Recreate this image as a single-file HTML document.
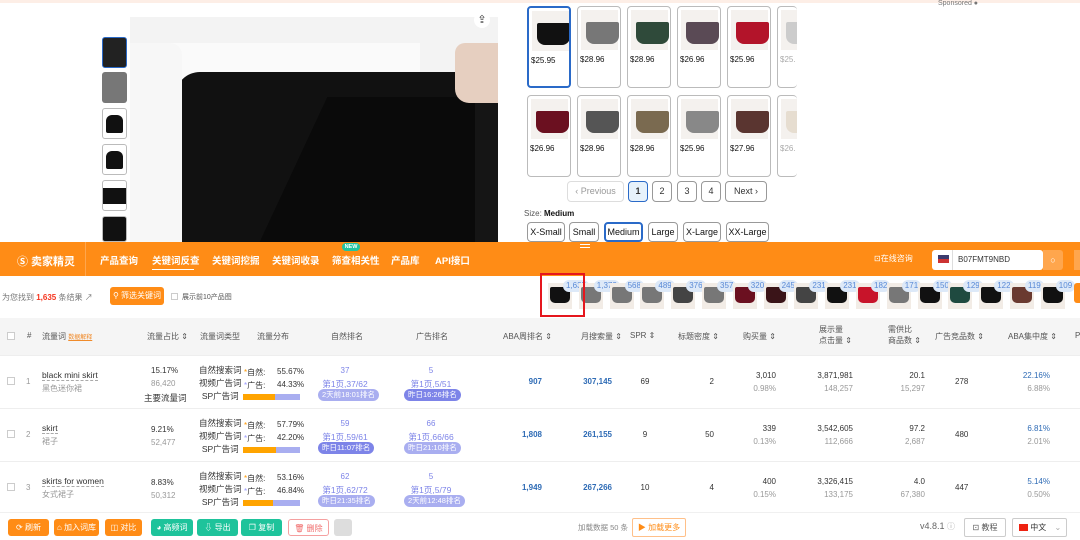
<!DOCTYPE html>
<html><head><meta charset="utf-8"><style>
*{margin:0;padding:0;box-sizing:border-box}
body{width:1080px;height:540px;overflow:hidden;background:#fff;font-family:"Liberation Sans","Noto Sans CJK SC",sans-serif;position:relative;color:#333}
.a{position:absolute}
.card{position:absolute;width:44px;height:82px;border:1px solid #bbb;border-radius:4px;background:#fff;overflow:hidden}
.card .im{position:absolute;left:3px;top:3px;width:37px;height:40px;background:#f4f1ee}
.card .sk{position:absolute;left:5px;top:12px;width:33px;height:22px;border-radius:2px 2px 8px 8px}
.card .p{position:absolute;left:2px;top:48px;font-size:8px;color:#111}
.pb{position:absolute;top:181px;height:21px;border:1px solid #999;border-radius:4px;font-size:9px;text-align:center;line-height:19px;background:#fff}
.sz{position:absolute;top:222px;height:20px;border:1px solid #999;border-radius:4px;font-size:9px;line-height:18px;text-align:center;color:#111}
.nav{position:absolute;left:0;top:242px;width:1080px;height:34px;background:#ff8c16}
.nav span{position:absolute;top:11px;color:#fff;font-size:9.5px;font-weight:bold}
.hd{position:absolute;top:318px;left:0;width:1080px;height:37px;background:#f5f5f5}
.hd span{position:absolute;font-size:8px;color:#555}
.row{position:absolute;left:0;width:1080px;border-top:1px solid #eee}
.t{position:absolute;font-size:8px;white-space:nowrap}
.g{color:#999}.b{color:#2e6bb5}.pu{color:#7d84e8}
.tag{position:absolute;font-size:7.5px;color:#fff;border-radius:7px;padding:0 4px;height:12px;line-height:12px;white-space:nowrap}
.bar{position:absolute;height:6px}
.btn{position:absolute;top:519px;height:17px;border-radius:3px;color:#fff;font-size:8px;line-height:17px;text-align:center}
.th{position:absolute;top:283px;width:24px;height:26px;}
.bd{position:absolute;top:280px;height:12px;border-radius:6px;background:#dde9f8;color:#5a8ad6;font-size:8px;line-height:12px;padding:0 3px}
</style></head><body>
<div class="a" style="left:0;top:0;width:1080px;height:3px;background:#fdeee6"></div>
<div class="a" style="left:938px;top:0;font-size:7px;color:#777">Sponsored ●</div>
<!-- thumbnails -->
<div class="a" style="left:102px;top:37px;width:25px;height:31px;border:1px solid #2a6ac8;border-radius:3px;background:#222"></div>
<div class="a" style="left:102px;top:72px;width:25px;height:31px;border-radius:3px;background:#777"></div>
<div class="a" style="left:102px;top:108px;width:25px;height:31px;border:1px solid #bbb;border-radius:3px;background:#fff"><div class="a" style="left:3px;top:6px;width:17px;height:18px;background:#111;border-radius:6px 6px 2px 2px"></div></div>
<div class="a" style="left:102px;top:144px;width:25px;height:31px;border:1px solid #bbb;border-radius:3px;background:#fff"><div class="a" style="left:3px;top:6px;width:17px;height:18px;background:#111;border-radius:6px 6px 2px 2px"></div></div>
<div class="a" style="left:102px;top:180px;width:25px;height:31px;border:1px solid #bbb;border-radius:3px;background:#fff"><div class="a" style="left:0;top:7px;width:23px;height:16px;background:#111"></div></div>
<div class="a" style="left:102px;top:216px;width:25px;height:26px;border:1px solid #bbb;border-radius:3px;background:#111"></div>
<!-- main image -->
<div class="a" style="left:130px;top:17px;width:368px;height:225px;background:#f3f3f3;overflow:hidden">
 <div class="a" style="left:0;top:26px;width:290px;height:60px;background:#fafafa"></div>
 <div class="a" style="left:45px;top:55px;width:323px;height:180px;background:#111;border-radius:25px 25px 0 0"></div>
 <div class="a" style="left:160px;top:80px;width:230px;height:160px;background:#0a0a0a;transform:skewX(-25deg)"></div>
 <div class="a" style="left:0;top:26px;width:52px;height:200px;background:#f7f7f7;border-radius:0 12px 0 0"></div>
 <div class="a" style="left:325px;top:26px;width:43px;height:60px;background:#e6cfc0;border-radius:10px 0 0 14px"></div>
 <div class="a" style="left:345px;top:86px;width:23px;height:150px;background:#151515"></div>
</div>
<div class="a" style="left:474px;top:12px;width:16px;height:16px;border-radius:8px;background:#fff;font-size:11px;text-align:center;line-height:16px">⇪</div>
<!-- swatches -->
<div class="card" style="left:527px;top:6px;border:2px solid #2a6ac8"><div class="im"><div class="sk" style="background:#111"></div></div><div class="p">$25.95</div></div>
<div class="card" style="left:577px;top:6px"><div class="im"><div class="sk" style="background:#777"></div></div><div class="p">$28.96</div></div>
<div class="card" style="left:627px;top:6px"><div class="im"><div class="sk" style="background:#2f4a3a"></div></div><div class="p">$28.96</div></div>
<div class="card" style="left:677px;top:6px"><div class="im"><div class="sk" style="background:#5a4a55"></div></div><div class="p">$26.96</div></div>
<div class="card" style="left:727px;top:6px"><div class="im"><div class="sk" style="background:#b3142a"></div></div><div class="p">$25.96</div></div>
<div class="card" style="left:777px;top:6px;width:20px;border-right:none"><div class="im"><div class="sk" style="background:#ccc"></div></div><div class="p" style="color:#aaa">$25.</div></div>
<div class="card" style="left:527px;top:95px"><div class="im"><div class="sk" style="background:#6b1020"></div></div><div class="p">$26.96</div></div>
<div class="card" style="left:577px;top:95px"><div class="im"><div class="sk" style="background:#555"></div></div><div class="p">$28.96</div></div>
<div class="card" style="left:627px;top:95px"><div class="im"><div class="sk" style="background:#7a6a50"></div></div><div class="p">$28.96</div></div>
<div class="card" style="left:677px;top:95px"><div class="im"><div class="sk" style="background:#888"></div></div><div class="p">$25.96</div></div>
<div class="card" style="left:727px;top:95px"><div class="im"><div class="sk" style="background:#5a3530"></div></div><div class="p">$27.96</div></div>
<div class="card" style="left:777px;top:95px;width:20px;border-right:none"><div class="im"><div class="sk" style="background:#e6ddd0"></div></div><div class="p" style="color:#aaa">$26.</div></div>
<div class="pb" style="left:567px;width:57px;color:#999;border-color:#ddd">‹ Previous</div>
<div class="pb" style="left:628px;width:20px;background:#e7f2fb;border:1px solid #2a6ac8;font-weight:bold">1</div>
<div class="pb" style="left:652px;width:20px">2</div>
<div class="pb" style="left:677px;width:20px">3</div>
<div class="pb" style="left:701px;width:20px">4</div>
<div class="pb" style="left:725px;width:42px">Next ›</div>
<div class="a" style="left:524px;top:209px;font-size:8px;color:#555">Size: <b style="color:#111">Medium</b></div>
<div class="sz" style="left:527px;width:38px">X-Small</div>
<div class="sz" style="left:569px;width:30px">Small</div>
<div class="sz" style="left:604px;width:39px;border:2px solid #2a6ac8;line-height:16px">Medium</div>
<div class="sz" style="left:648px;width:30px">Large</div>
<div class="sz" style="left:683px;width:38px">X-Large</div>
<div class="sz" style="left:726px;width:43px">XX-Large</div>
<!-- nav -->
<div class="nav">
 <div class="a" style="left:85px;top:0;width:1px;height:34px;background:#ffa64d"></div>
 <span style="left:17px;font-size:11px">Ⓢ 卖家精灵</span>
 <span style="left:100px">产品查询</span>
 <span style="left:152px">关键词反查</span>
 <div class="a" style="left:152px;top:27px;width:42px;height:1px;background:#fff"></div>
 <span style="left:212px">关键词挖掘</span>
 <span style="left:272px">关键词收录</span>
 <span style="left:332px">筛查相关性</span>
 <div class="a" style="left:342px;top:1px;width:18px;height:8px;border-radius:4px;background:#21c4a0;color:#fff;font-size:5.5px;text-align:center;line-height:8px;font-weight:bold">NEW</div>
 <span style="left:391px">产品库</span>
 <span style="left:435px">API接口</span>
 <div class="a" style="left:580px;top:2px;width:10px;height:4px;border-top:1px solid #fff;border-bottom:1px solid #fff"></div>
 <span style="left:874px;font-weight:normal;font-size:8px">⊡在线咨询</span>
 <div class="a" style="left:932px;top:8px;width:111px;height:20px;background:#fff;border-radius:3px"></div>
 <div class="a" style="left:938px;top:13px;width:11px;height:8px;background:linear-gradient(#3c3b6e 0 50%,#c33 50%)"></div>
 <div class="a" style="left:952px;top:8px;width:1px;height:20px;background:#ddd"></div>
 <div class="a" style="left:958px;top:13px;font-size:8px;color:#333">B07FMT9NBD</div>
 <div class="a" style="left:1043px;top:8px;width:20px;height:20px;background:#ffa64d;border-radius:0 3px 3px 0;color:#fff;font-size:9px;text-align:center;line-height:20px">○</div>
 <div class="a" style="left:1074px;top:8px;width:6px;height:20px;background:#ffa64d"></div>
</div>
<!-- toolbar -->
<div class="a" style="left:2px;top:292px;font-size:8px;color:#777">为您找到 <b style="color:#f5341e">1,635</b> 条结果 ↗</div>
<div class="a" style="left:110px;top:287px;width:54px;height:18px;border-radius:3px;background:#ff8c16;color:#fff;font-size:8px;line-height:18px;text-align:center">⚲ 筛选关键词</div>
<div class="a" style="left:171px;top:293px;width:7px;height:7px;border:1px solid #ccc"></div>
<div class="a" style="left:182px;top:292px;font-size:7px;color:#555">展示前10产品图</div>
<div id="ths"></div>
<div class="a" style="left:540px;top:273px;width:45px;height:44px;border:2px solid #e5161d"></div>
<div class="a" style="left:1074px;top:283px;width:6px;height:20px;background:#ff8c16;border-radius:3px 0 0 3px"></div>
<!-- header -->
<div class="hd">
 <div class="a" style="left:7px;top:14px;width:8px;height:8px;border:1px solid #ccc;background:#fff"></div>
 <span style="left:27px;top:13px">#</span>
 <span style="left:42px;top:13px">流量词 <u style="color:#f08b2b;font-size:6px">数据解释</u></span>
 <span style="left:147px;top:13px">流量占比 ⇕</span>
 <span style="left:200px;top:13px">流量词类型</span>
 <span style="left:257px;top:13px">流量分布</span>
 <span style="left:331px;top:13px">自然排名</span>
 <span style="left:416px;top:13px">广告排名</span>
 <span style="left:503px;top:13px">ABA周排名 ⇕</span>
 <span style="left:581px;top:13px">月搜索量 ⇕</span>
 <span style="left:630px;top:13px">SPR ⇕</span>
 <span style="left:678px;top:13px">标题密度 ⇕</span>
 <span style="left:743px;top:13px">购买量 ⇕</span>
 <span style="left:819px;top:6px">展示量<br>点击量 ⇕</span>
 <span style="left:888px;top:6px">需供比<br>商品数 ⇕</span>
 <span style="left:935px;top:13px">广告竞品数 ⇕</span>
 <span style="left:1008px;top:13px">ABA集中度 ⇕</span>
 <span style="left:1075px;top:13px">P</span>
</div>
<div id="rows"></div>
<!-- bottom -->
<div class="a" style="left:0;top:512px;width:1080px;height:28px;background:#fff;border-top:1px solid #f0f0f0"></div>
<div class="btn" style="left:8px;width:41px;background:#ff8c16">⟳ 刷新</div>
<div class="btn" style="left:54px;width:45px;background:#ff8c16">⌂ 加入词库</div>
<div class="btn" style="left:105px;width:37px;background:#ff8c16">◫ 对比</div>
<div class="btn" style="left:151px;width:42px;background:#1ec39b">◕ 高频词</div>
<div class="btn" style="left:197px;width:41px;background:#1ec39b">⇩ 导出</div>
<div class="btn" style="left:241px;width:41px;background:#1ec39b">❐ 复制</div>
<div class="btn" style="left:288px;width:41px;background:#fff;border:1px solid #f5a0a0;color:#f06b6b">🗑 删除</div>
<div class="btn" style="left:334px;width:18px;background:#ddd"></div>
<div class="a" style="left:578px;top:522px;font-size:7.5px;color:#888">加载数据 50 条</div>
<div class="a" style="left:632px;top:518px;width:54px;height:19px;border:1px solid #ffc089;border-radius:2px;color:#ff8c16;font-size:8px;line-height:17px;text-align:center">▶ 加载更多</div>
<div class="a" style="left:920px;top:521px;font-size:9px;color:#666">v4.8.1 <span style="font-size:8px;color:#aaa">ⓘ</span></div>
<div class="a" style="left:964px;top:518px;width:42px;height:19px;border:1px solid #ccc;border-radius:2px;font-size:8px;line-height:17px;text-align:center;color:#555">⊡ 教程</div>
<div class="a" style="left:1012px;top:518px;width:55px;height:19px;border:1px solid #ccc;border-radius:2px;font-size:8px;line-height:17px;color:#333;padding-left:6px"><i style="display:inline-block;width:9px;height:7px;background:#e21;vertical-align:-1px"></i> 中文 <span style="color:#aaa;margin-left:6px">⌄</span></div>
<script>
var cols=['#111','#777','#777','#777','#444','#777','#6b1020','#3a1418','#444','#111','#c8142a','#777','#111','#1f4a40','#111','#6a3a30','#111'];
var nums=['1,635','1,373','568','489','376','357','320','245','231','231','182','171','150','129','122','119','109'];
var h='';
for(var i=0;i<17;i++){var x=548+i*30.8;
h+='<div class="th" style="left:'+x+'px;background:#f2ece6"><div class="a" style="left:2px;top:4px;width:20px;height:16px;background:'+cols[i]+';border-radius:2px 2px 5px 5px"></div></div>';
h+='<div class="bd" style="left:'+(x+15)+'px">'+nums[i]+'</div>';}
document.getElementById('ths').innerHTML=h;
var R=[
['1','black mini skirt','黑色迷你裙','15.17%','86,420','主要流量词','55.67%','44.33%','37','第1页,37/62','2天前18:01排名','#a9aef0','5','第1页,5/51','昨日16:26排名','#7d84e8','907','307,145','69','2','3,010','0.98%','3,871,981','148,257','20.1','15,297','278','22.16%','6.88%'],
['2','skirt','裙子','9.21%','52,477','','57.79%','42.20%','59','第1页,59/61','昨日11:07排名','#7d84e8','66','第1页,66/66','昨日21:10排名','#a9aef0','1,808','261,155','9','50','339','0.13%','3,542,605','112,666','97.2','2,687','480','6.81%','2.01%'],
['3','skirts for women','女式裙子','8.83%','50,312','','53.16%','46.84%','62','第1页,62/72','昨日21:35排名','#a9aef0','5','第1页,5/79','2天前12:48排名','#a9aef0','1,949','267,266','10','4','400','0.15%','3,326,415','133,175','4.0','67,380','447','5.14%','0.50%']];
var tops=[355,408,461],o='';
R.forEach(function(r,k){var y=tops[k];var c=y+26;
o+='<div class="row" style="top:'+y+'px;height:53px"></div>';
o+='<div class="a" style="left:7px;top:'+(c-4)+'px;width:8px;height:8px;border:1px solid #ccc"></div>';
o+='<div class="t g" style="left:26px;top:'+(c-4)+'px">'+r[0]+'</div>';
o+='<div class="t" style="left:42px;top:'+(c-11)+'px;font-size:8.5px;border-bottom:1px dashed #aaa">'+r[1]+'</div>';
o+='<div class="t g" style="left:42px;top:'+(c+2)+'px">'+r[2]+'</div>';
var dy=r[5]?-15:-9;
o+='<div class="t" style="left:151px;top:'+(c+dy)+'px">'+r[3]+'</div>';
o+='<div class="t g" style="left:151px;top:'+(c+dy+13)+'px">'+r[4]+'</div>';
if(r[5])o+='<div class="t" style="left:144px;top:'+(c+11)+'px;font-size:8.5px">'+r[5]+'</div>';
o+='<div class="t" style="left:199px;top:'+(c-17)+'px;line-height:13px;text-align:center;font-size:8.5px">自然搜索词<br>视频广告词<br>SP广告词</div>';
o+='<div class="t" style="left:244px;top:'+(c-14)+'px"><span style="color:#f90">*</span>自然:</div><div class="t" style="left:277px;top:'+(c-14)+'px">'+r[6]+'</div>';
o+='<div class="t" style="left:244px;top:'+(c-1)+'px"><span style="color:#99f">*</span>广告:</div><div class="t" style="left:277px;top:'+(c-1)+'px">'+r[7]+'</div>';
var w=parseFloat(r[6])/100*57;
o+='<div class="bar" style="left:243px;top:'+(c+13)+'px;width:'+w+'px;background:#ffa400"></div><div class="bar" style="left:'+(243+w)+'px;top:'+(c+13)+'px;width:'+(57-w)+'px;background:#a9aef0"></div>';
[[345,8],[431,12]].forEach(function(p){var x=p[0],i=p[1];
o+='<div class="t pu" style="left:'+(x-20)+'px;width:40px;text-align:center;top:'+(c-15)+'px">'+r[i]+'</div>';
o+='<div class="t pu" style="left:'+(x-30)+'px;width:60px;text-align:center;top:'+(c-3)+'px;font-size:8.5px">'+r[i+1]+'</div>';
o+='<div class="tag" style="left:'+(x-27)+'px;top:'+(c+8)+'px;background:'+r[i+3]+'">'+r[i+2]+'</div>';});
o+='<div class="t b" style="left:500px;width:42px;text-align:right;top:'+(c-4)+'px;font-weight:bold">'+r[16]+'</div>';
o+='<div class="t b" style="left:570px;width:42px;text-align:right;top:'+(c-4)+'px;font-weight:bold">'+r[17]+'</div>';
o+='<div class="t" style="left:630px;width:30px;text-align:center;top:'+(c-4)+'px">'+r[18]+'</div>';
o+='<div class="t" style="left:684px;width:30px;text-align:right;top:'+(c-4)+'px">'+r[19]+'</div>';
function two(x,a,b,cl){o+='<div class="t '+(cl||'')+'" style="left:'+(x-60)+'px;width:60px;text-align:right;top:'+(c-10)+'px">'+a+'</div><div class="t g" style="left:'+(x-60)+'px;width:60px;text-align:right;top:'+(c+3)+'px">'+b+'</div>';}
two(776,r[20],r[21]);two(853,r[22],r[23]);two(925,r[24],r[25]);
o+='<div class="t" style="left:955px;top:'+(c-4)+'px">'+r[26]+'</div>';
two(1050,r[27],r[28],'b');
});
document.getElementById('rows').innerHTML=o;
</script>
</body></html>
